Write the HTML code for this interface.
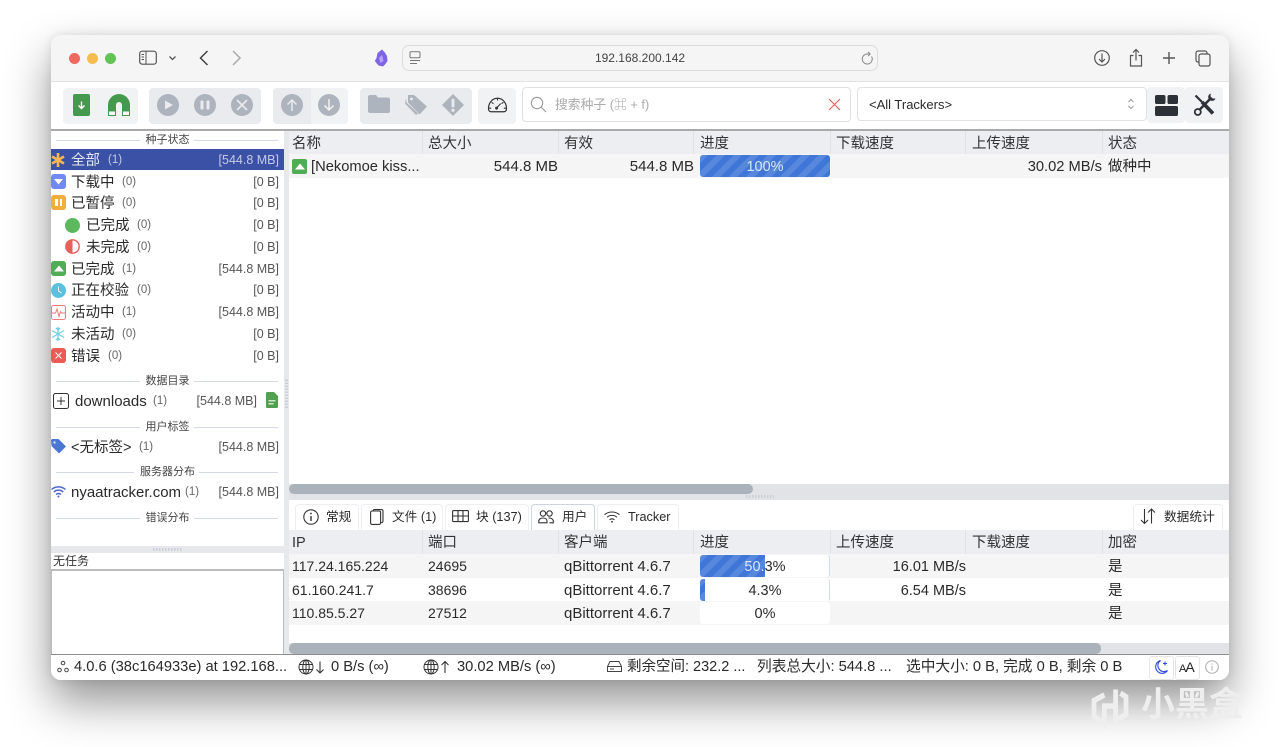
<!DOCTYPE html>
<html lang="zh"><head><meta charset="utf-8"><title>qBittorrent</title>
<style>
html,body{margin:0;padding:0;width:1280px;height:747px;overflow:hidden;background:#fff;font-family:"Liberation Sans","Noto Sans CJK SC",sans-serif;color:#222}
#win{position:absolute;left:51px;top:35px;width:1178px;height:645px;border-radius:10px;background:#fff;box-shadow:0 22px 45px rgba(0,0,0,.42),0 0 10px rgba(0,0,0,.1)}
.a{position:absolute}
.t{position:absolute;white-space:nowrap;line-height:20px;height:20px;font-size:14.5px;color:#2a2a2a;margin-top:1px}
.r{text-align:right}
.c{font-size:11.5px;color:#666}
.z{font-size:12.500px;color:#555;text-align:right;width:90px;left:189px}
.g{font-size:11px;color:#444;text-align:center}
.l{position:absolute;height:1px;background:#d5dae2}
.h{font-size:14.500px;color:#333}
.n{font-size:14px}
.q{font-size:15px}
.m{font-size:14.700px}
.k{font-size:12.700px}
.n,.c,.z,.g,.k,.o{margin-top:0}
.d{position:absolute;width:1px;background:#dfe1e6}
.s{position:absolute;overflow:visible}
.b{position:absolute;border-radius:4px}
.tab{position:absolute;top:504px;height:26px;background:#fff;border:1px solid #eceef2;border-bottom:0;border-radius:4px 4px 0 0;box-sizing:border-box}
.stripe{background-color:#3f76d8;background-image:repeating-linear-gradient(135deg,rgba(255,255,255,.13) 0 6px,transparent 6px 12px)}
</style></head><body>
<div id="win"></div>
<!-- title bar -->
<div class="a" style="left:51px;top:35px;width:1178px;height:47px;background:#f5f5f5;border-radius:10px 10px 0 0;border-bottom:1px solid #e2e2e2;box-sizing:border-box"></div>
<div class="a" style="left:69px;top:53px;width:11px;height:11px;border-radius:50%;background:#ee6a5f"></div>
<div class="a" style="left:87px;top:53px;width:11px;height:11px;border-radius:50%;background:#f5bd4f"></div>
<div class="a" style="left:105px;top:53px;width:11px;height:11px;border-radius:50%;background:#61c454"></div>
<svg class="s" style="left:139px;top:50px" width="40" height="16" viewBox="0 0 40 16" fill="none" stroke="#555"><rect x=".7" y="1.2" width="16.6" height="13" rx="2.5" stroke-width="1.2"/><path d="M7 1.5V14M2.500 4.500H5M2.500 7H5M2.500 9.500H5" stroke-width="1"/><path d="M30.500 6.500l3 3 3-3" stroke-width="1.300"/></svg>
<svg class="s" style="left:198px;top:49px" width="46" height="18" viewBox="0 0 46 18" fill="none" stroke-width="1.500"><path d="M9.500 2L2.500 9l7 7" stroke="#444"/><path d="M35 2l7 7-7 7" stroke="#aaa"/></svg>
<svg class="s" style="left:374px;top:49px" width="15" height="18" viewBox="0 0 15 18"><path d="M8 0.500L3.500 4 2.500 9 0.800 12 4.500 16.500 9 17.500 11 15.500 13.500 12 13 7 10.500 3z" fill="#8064e8"/><path d="M5 9l3-3 1.500 6-3 2z" fill="#b7a5f5"/></svg>
<div class="a" style="left:402px;top:45px;width:476px;height:26px;border:1px solid #dcdcdc;border-radius:7px;background:#f5f5f5;box-sizing:border-box"></div>
<svg class="s" style="left:409px;top:51px" width="13" height="14" viewBox="0 0 13 14" fill="none" stroke="#777" stroke-width="1"><rect x="1" y=".8" width="10" height="6" rx="1"/><path d="M1 9.500h10M1 12.500h7"/></svg>
<div class="t o" style="left:540px;width:200px;top:48px;text-align:center;font-size:12px;color:#444">192.168.200.142</div>
<svg class="s" style="left:861px;top:51px" width="13" height="14" viewBox="0 0 13 14" fill="none" stroke="#888" stroke-width="1"><path d="M10.600 5.500A5 5 0 1 1 6.500 3H9"/><path d="M7 .8L9.200 3 7 5.200"/></svg>
<svg class="s" style="left:1093px;top:48px" width="122" height="20" viewBox="0 0 122 20" fill="none" stroke="#555" stroke-width="1.200"><circle cx="9" cy="10" r="7.300"/><path d="M9 5.500v8.500M6 11l3 3 3-3"/><path d="M43 1.500v11M40 4.500l3-3 3 3M40.500 7.500H37.500v10.500h11V7.500h-3"/><path d="M76 4v12M70 10h12" stroke-width="1.400"/><rect x="103" y="3" width="11" height="11" rx="2"/><rect x="106" y="6" width="11" height="12" rx="2" fill="#f5f5f5"/></svg>
<!-- toolbar -->
<div class="a" style="left:51px;top:82px;width:1178px;height:47px;background:#fff;border-bottom:2px solid #a9a9a9"></div>
<div class="b" style="left:63px;top:88px;width:75px;height:36px;background:#f1f2f4"></div>
<div class="b" style="left:149px;top:88px;width:112px;height:36px;background:#e9ebef"></div>
<div class="b" style="left:273px;top:88px;width:75px;height:36px;background:#f1f2f4"></div>
<div class="b" style="left:273px;top:88px;width:38px;height:36px;background:#e9ebef;border-radius:4px 0 0 4px"></div>
<div class="b" style="left:360px;top:88px;width:112px;height:36px;background:#e9ebef"></div>
<div class="b" style="left:478px;top:88px;width:38px;height:36px;background:#f1f2f4"></div>
<svg class="s" style="left:73px;top:94px" width="18" height="22" viewBox="0 0 18 22"><rect x="0" y="0" width="17" height="22" rx="2" fill="#44994d"/><path d="M8.500 7.500v7M5.500 11.500l3 3 3-3" stroke="#fff" stroke-width="1.400" fill="none"/></svg>
<svg class="s" style="left:108px;top:94px" width="22" height="22" viewBox="0 0 22 22"><path d="M0 22V11A11 11 0 0 1 22 11V22H14V11A3 3 0 0 0 8 11V22z" fill="#44994d"/><rect x="1" y="17.500" width="6" height="3.500" fill="#fff"/><rect x="15" y="17.500" width="6" height="3.500" fill="#fff"/></svg>
<svg class="s" style="left:157px;top:94px" width="96" height="22" viewBox="0 0 96 22"><g fill="#adb4bd"><circle cx="11" cy="11" r="11"/><circle cx="48" cy="11" r="11"/><circle cx="85" cy="11" r="11"/></g><path d="M8 6.500l8 4.500-8 4.500z" fill="#e9ebef"/><rect x="43.500" y="6.500" width="3" height="9" rx="1" fill="#e9ebef"/><rect x="49.500" y="6.500" width="3" height="9" rx="1" fill="#e9ebef"/><path d="M80 6l10 10M90 6L80 16" stroke="#e9ebef" stroke-width="1.600"/></svg>
<svg class="s" style="left:281px;top:94px" width="60" height="22" viewBox="0 0 60 22"><g fill="#adb4bd"><circle cx="11" cy="11" r="11"/><circle cx="48" cy="11" r="11"/></g><path d="M11 17V6M6.500 10.500L11 6l4.500 4.500" stroke="#e9ebef" stroke-width="1.500" fill="none"/><path d="M48 5v11M43.500 11.500L48 16l4.500-4.500" stroke="#f1f2f4" stroke-width="1.500" fill="none"/></svg>
<svg class="s" style="left:368px;top:95px" width="22" height="18" viewBox="0 0 22 18"><path d="M0 2A2 2 0 0 1 2 0H8L10 2.500H20A2 2 0 0 1 22 4.500V16A2 2 0 0 1 20 18H2A2 2 0 0 1 0 16z" fill="#adb4bd"/></svg>
<svg class="s" style="left:405px;top:94px" width="23" height="22" viewBox="0 0 23 22"><path d="M1 4.500L0 9.500 11 21l2-1.500L1.500 8.500z" fill="#adb4bd"/><path d="M3 1H9L22 12.500 14.500 20.500 3 8.500zM6.500 3.500a1.500 1.500 0 1 0 .01 0" fill="#adb4bd" fill-rule="evenodd"/></svg>
<svg class="s" style="left:442px;top:94px" width="22" height="22" viewBox="0 0 23 23"><path d="M11.500 0L23 11.500 11.500 23 0 11.500z" fill="#adb4bd"/><rect x="10" y="5" width="3" height="9" rx="1" fill="#e9ebef"/><circle cx="11.500" cy="17" r="1.700" fill="#e9ebef"/></svg>
<svg class="s" style="left:487px;top:96px" width="21" height="18" viewBox="0 0 23 20" fill="none" stroke="#333" stroke-width="1.300"><path d="M4.500 17.500H18.500A3 3 0 0 0 21.500 14.500C21.800 8 17.500 2.500 11.500 2.500S1.200 8 1.500 14.500A3 3 0 0 0 4.500 17.500z"/><path d="M11.500 2.500v2.500M5 7l2 1.500M18 7l-2 1.500M2 13.500h2.500M21 13.500h-2.500M9.800 14L15 8.500" stroke-width="1.200"/><circle cx="10.500" cy="13.500" r="1" fill="#333"/></svg>
<div class="a" style="left:522px;top:87px;width:329px;height:35px;border:1px solid #dfe1e5;border-radius:4px;background:#fff;box-sizing:border-box"></div>
<svg class="s" style="left:530px;top:96px" width="17" height="17" viewBox="0 0 17 17" fill="none" stroke="#9a9a9a" stroke-width="1.100"><circle cx="7" cy="7" r="5.700"/><path d="M11 11l5 5"/></svg>
<div class="t o" style="left:555px;top:95px;font-size:12.800px;color:#aaa">搜索种子 (⌘ + f)</div>
<svg class="s" style="left:828px;top:98px" width="13" height="13" viewBox="0 0 13 13" stroke="#e8655e" stroke-width="1.200"><path d="M1 1l11 11M12 1L1 12"/></svg>
<div class="a" style="left:857px;top:87px;width:290px;height:34px;border:1px solid #dfe1e5;border-radius:4px;background:#fff;box-sizing:border-box"></div>
<div class="t" style="left:869px;top:94px;font-size:13px">&lt;All Trackers&gt;</div>
<svg class="s" style="left:1127px;top:97px" width="8" height="14" viewBox="0 0 8 14" fill="none" stroke="#999"><path d="M1.500 5L4 2.500 6.500 5M1.500 9L4 11.500 6.500 9"/></svg>
<div class="b" style="left:1147px;top:87px;width:38px;height:36px;background:#f1f2f4"></div>
<div class="b" style="left:1185px;top:87px;width:38px;height:36px;background:#f1f2f4"></div>
<svg class="s" style="left:1155px;top:95px" width="23" height="21" viewBox="0 0 23 21" fill="#2c3138"><rect x="0" y="0" width="10.500" height="9" rx="1.800"/><rect x="12.500" y="0" width="10.500" height="9" rx="1.800"/><rect x="0" y="11" width="23" height="10" rx="1.800"/></svg>
<svg class="s" style="left:1193px;top:93px" width="23" height="24" viewBox="0 0 23 24" fill="none" stroke="#2c3138"><path d="M2.500 2.500L9 9" stroke-width="2.200"/><path d="M9 9L20 20.500" stroke-width="3.600"/><path d="M18.500 4.500L6.800 16.500" stroke-width="2.400"/><path d="M22.500 5.500c-.6 2-3 3-5 2l-2-2c-.8-2 .2-4.300 2.200-5l-.2 3 2 2z" fill="#2c3138" stroke="none"/><circle cx="4.800" cy="19" r="3" stroke-width="1.800"/></svg>
<!-- sidebar -->
<div class="a" style="left:51px;top:131px;width:233px;height:415px;background:#fff"></div>
<div class="l" style="left:56px;top:140px;width:84px"></div><div class="l" style="left:194px;top:140px;width:84px"></div>
<div class="t g" style="left:51px;width:233px;top:130px">种子状态</div>
<div class="a" style="left:51px;top:149px;width:233px;height:21px;background:#3a51a5"></div>
<svg class="s" style="left:51px;top:153px" width="14" height="14" viewBox="0 0 14 14" stroke="#f5b74d" stroke-width="2.600"><path d="M7 0V14M1 3.500L13 10.500M13 3.500L1 10.500"/></svg>
<div class="t" style="left:71px;top:150px;color:#e6e9f5">全部</div><div class="t c" style="left:108px;top:150px;color:#c5cbe6">(1)</div><div class="t z" style="top:150px;color:#c5cbe6">[544.8 MB]</div>

<div class="b" style="left:51px;top:174px;width:15px;height:15px;background:#7189f0;border-radius:3px"></div><svg class="s" style="left:54px;top:179px" width="9" height="6"><path d="M0 0h9L4.500 5.500z" fill="#fff"/></svg>
<div class="t" style="left:71px;top:172px">下载中</div><div class="t c" style="left:122px;top:172px">(0)</div><div class="t z" style="top:172px">[0 B]</div>

<div class="b" style="left:51px;top:195px;width:15px;height:15px;background:#f2ae3d;border-radius:3px"></div><div class="a" style="left:55px;top:199px;width:2.500px;height:7px;background:#fff"></div><div class="a" style="left:59.500px;top:199px;width:2.500px;height:7px;background:#fff"></div>
<div class="t" style="left:71px;top:193px">已暂停</div><div class="t c" style="left:122px;top:193px">(0)</div><div class="t z" style="top:193px">[0 B]</div>

<div class="a" style="left:65px;top:218px;width:15px;height:15px;border-radius:50%;background:#5cb85c"></div>
<div class="t" style="left:86px;top:215px">已完成</div><div class="t c" style="left:137px;top:215px">(0)</div><div class="t z" style="top:215px">[0 B]</div>

<svg class="s" style="left:65px;top:239px" width="15" height="15" viewBox="0 0 15 15"><circle cx="7.500" cy="7.500" r="6.700" fill="#fff" stroke="#e8605a" stroke-width="1.400"/><path d="M7.500 1A6.500 6.500 0 0 1 7.500 14z" fill="#e8605a" transform="rotate(180 7.500 7.500)"/></svg>
<div class="t" style="left:86px;top:237px">未完成</div><div class="t c" style="left:137px;top:237px">(0)</div><div class="t z" style="top:237px">[0 B]</div>

<div class="b" style="left:51px;top:261px;width:15px;height:15px;background:#51ad55;border-radius:3px"></div><svg class="s" style="left:53.500px;top:265px" width="10" height="7"><path d="M0 6.500L5 .5l5 6z" fill="#fff"/></svg>
<div class="t" style="left:71px;top:259px">已完成</div><div class="t c" style="left:122px;top:259px">(1)</div><div class="t z" style="top:259px">[544.8 MB]</div>

<svg class="s" style="left:51px;top:283px" width="15" height="15" viewBox="0 0 15 15"><circle cx="7.500" cy="7.500" r="7.500" fill="#5bc0de"/><path d="M7.500 3.500v4.500l3 2" stroke="#fff" fill="none"/></svg>
<div class="t" style="left:71px;top:280px">正在校验</div><div class="t c" style="left:137px;top:280px">(0)</div><div class="t z" style="top:280px">[0 B]</div>

<svg class="s" style="left:51px;top:305px" width="15" height="15" viewBox="0 0 15 15" fill="none" stroke="#ee7d78"><rect x=".5" y=".5" width="14" height="14" rx="2"/><path d="M1 8H4.500L6 4l2 7.500L9.500 6.500 10.500 8H14"/></svg>
<div class="t" style="left:71px;top:302px">活动中</div><div class="t c" style="left:122px;top:302px">(1)</div><div class="t z" style="top:302px">[544.8 MB]</div>

<svg class="s" style="left:51px;top:327px" width="14" height="14" viewBox="0 0 14 14" stroke="#6fcfe4" stroke-width="1.300" fill="none"><path d="M7 0V14M1 3.500L13 10.500M13 3.500L1 10.500M5 1l2 2 2-2M5 13l2-2 2 2"/></svg>
<div class="t" style="left:71px;top:324px">未活动</div><div class="t c" style="left:122px;top:324px">(0)</div><div class="t z" style="top:324px">[0 B]</div>

<div class="b" style="left:51px;top:348px;width:15px;height:15px;background:#ea5b55;border-radius:3px"></div><svg class="s" style="left:55px;top:352px" width="7" height="7"><path d="M.5 .5l6 6M6.500 .5l-6 6" stroke="#fff"/></svg>
<div class="t" style="left:71px;top:346px">错误</div><div class="t c" style="left:108px;top:346px">(0)</div><div class="t z" style="top:346px">[0 B]</div>

<div class="l" style="left:56px;top:381px;width:84px"></div><div class="l" style="left:194px;top:381px;width:84px"></div>
<div class="t g" style="left:51px;width:233px;top:371px">数据目录</div>
<svg class="s" style="left:53px;top:393px" width="16" height="16" viewBox="0 0 16 16" fill="none" stroke="#333"><rect x=".5" y=".5" width="15" height="15" rx="2"/><path d="M8 4v8M4 8h8"/></svg>
<div class="t q" style="left:75px;top:391px">downloads</div><div class="t c" style="left:153px;top:391px">(1)</div><div class="t z" style="top:391px;left:167px">[544.8 MB]</div>
<svg class="s" style="left:266px;top:392px" width="12" height="16" viewBox="0 0 12 16"><path d="M1.500 0H8L12 4V14.500A1.500 1.500 0 0 1 10.500 16H1.500A1.500 1.500 0 0 1 0 14.500V1.500A1.500 1.500 0 0 1 1.500 0z" fill="#51a04f"/><path d="M2.500 8h7v1.500h-7zM2.500 11h5v1.500h-5z" fill="#cfe6cd"/></svg>

<div class="l" style="left:56px;top:427px;width:84px"></div><div class="l" style="left:194px;top:427px;width:84px"></div>
<div class="t g" style="left:51px;width:233px;top:417px">用户标签</div>
<svg class="s" style="left:51px;top:439px" width="15" height="15" viewBox="0 0 15 15"><path d="M1 0H7.500L15 7.500 8 14.500 0.500 7 0 1z" fill="#4a76d4"/><circle cx="3.500" cy="3.500" r="1.200" fill="#cfdcf7"/></svg>
<div class="t" style="left:71px;top:437px">&lt;无标签&gt;</div><div class="t c" style="left:139px;top:437px">(1)</div><div class="t z" style="top:437px">[544.8 MB]</div>

<div class="l" style="left:56px;top:472px;width:78px"></div><div class="l" style="left:199px;top:472px;width:79px"></div>
<div class="t g" style="left:51px;width:233px;top:462px">服务器分布</div>
<svg class="s" style="left:51px;top:486px" width="15" height="12" viewBox="0 0 15 12" fill="none" stroke="#4a66cc" stroke-width="1.400"><path d="M.5 3.500C4.500 0 10.500 0 14.500 3.500M2.800 6C5.500 3.500 9.500 3.500 12.200 6M5 8.500C6.500 7.300 8.500 7.300 10 8.500"/><circle cx="7.500" cy="10.500" r="1" fill="#4a66cc" stroke="none"/></svg>
<div class="t q" style="left:71px;top:482px">nyaatracker.com</div><div class="t c" style="left:185px;top:482px">(1)</div><div class="t z" style="top:482px">[544.8 MB]</div>

<div class="l" style="left:56px;top:518px;width:84px"></div><div class="l" style="left:194px;top:518px;width:84px"></div>
<div class="t g" style="left:51px;width:233px;top:508px">错误分布</div>

<!-- splitter + log -->
<div class="a" style="left:51px;top:546px;width:233px;height:7px;background:#e6e8ec"></div>
<div class="a" style="left:153px;top:548px;width:29px;height:3px;background:repeating-linear-gradient(90deg,#ccd0d6 0 1.500px,transparent 1.500px 3px)"></div>
<div class="a" style="left:51px;top:553px;width:233px;height:17px;background:#fff"></div>
<div class="t o" style="left:53px;top:551px;font-size:12px;color:#333">无任务</div>
<div class="a" style="left:51px;top:569px;width:233px;height:85px;border:1px solid #bbb;border-width:2px 1px 0;box-sizing:border-box;background:#fff"></div>
<div class="a" style="left:284px;top:131px;width:5px;height:523px;background:#e6e8ec"></div>
<div class="a" style="left:285px;top:378px;width:3px;height:30px;background:repeating-linear-gradient(0deg,#ccd0d6 0 1.500px,transparent 1.500px 3px)"></div>

<!-- top table -->
<div class="a" style="left:289px;top:131px;width:940px;height:23px;background:#eceef2"></div>
<div class="a" style="left:289px;top:154px;width:940px;height:24px;background:#f5f5f5"></div>
<div class="d" style="left:422px;top:131px;height:23px"></div><div class="d" style="left:558px;top:131px;height:23px"></div><div class="d" style="left:693px;top:131px;height:23px"></div><div class="d" style="left:830px;top:131px;height:23px"></div><div class="d" style="left:965px;top:131px;height:23px"></div><div class="d" style="left:1102px;top:131px;height:23px"></div>
<div class="t h" style="left:292px;top:133px">名称</div><div class="t h" style="left:428px;top:133px">总大小</div><div class="t h" style="left:564px;top:133px">有效</div><div class="t h" style="left:700px;top:133px">进度</div><div class="t h" style="left:836px;top:133px">下载速度</div><div class="t h" style="left:972px;top:133px">上传速度</div><div class="t h" style="left:1108px;top:133px">状态</div>
<div class="b" style="left:292px;top:159px;width:15px;height:15px;background:#51ad55;border-radius:2px"></div><svg class="s" style="left:294.500px;top:163px" width="10" height="7"><path d="M0 6.500L5 .5l5 6z" fill="#fff"/></svg>
<div class="t m" style="left:311px;top:156px">[Nekomoe kiss...</div>
<div class="t r q" style="left:428px;width:130px;top:156px">544.8 MB</div>
<div class="t r q" style="left:564px;width:130px;top:156px">544.8 MB</div>
<div class="a stripe" style="left:700px;top:155px;width:130px;height:22px;border-radius:3px"></div>
<div class="t" style="left:700px;width:130px;top:156px;text-align:center;color:#dbe6fa">100%</div>
<div class="t r m" style="left:972px;width:130px;top:156px">30.02 MB/s</div>
<div class="t" style="left:1108px;top:156px">做种中</div>

<!-- scrollbar 1 -->
<div class="a" style="left:289px;top:484px;width:940px;height:16px;background:#e1e3e7"></div>
<div class="a" style="left:289px;top:484px;width:464px;height:10px;background:#aab2bb;border-radius:5px"></div>
<div class="a" style="left:746px;top:495px;width:28px;height:3px;background:repeating-linear-gradient(90deg,#ccd0d6 0 1.500px,transparent 1.500px 3px)"></div>

<!-- tabs -->
<div class="tab" style="left:295px;width:64px"></div>
<div class="tab" style="left:361px;width:82px"></div>
<div class="tab" style="left:445px;width:84px"></div>
<div class="tab" style="left:531px;width:64px;border-color:#cfd3da"></div>
<div class="tab" style="left:597px;width:82px"></div>
<div class="tab" style="left:1133px;width:90px"></div>
<svg class="s" style="left:303px;top:509px" width="16" height="16" viewBox="0 0 16 16" fill="none" stroke="#333" stroke-width="1.100"><circle cx="8" cy="8" r="7.200"/><path d="M8 7v5" stroke-width="1.400"/><circle cx="8" cy="4.500" r=".9" fill="#333" stroke="none"/></svg>
<div class="t k" style="left:326px;top:507px">常规</div>
<svg class="s" style="left:370px;top:509px" width="14" height="16" viewBox="0 0 14 16" fill="none" stroke="#333" stroke-width="1.100"><rect x=".6" y="2" width="10" height="13.400" rx="1.500"/><path d="M3 2A1.500 1.500 0 0 1 4.500 .6H11.500A1.500 1.500 0 0 1 13 2V12A1.500 1.500 0 0 1 11 13.500"/></svg>
<div class="t k" style="left:392px;top:507px">文件 (1)</div>
<svg class="s" style="left:452px;top:510px" width="17" height="13" viewBox="0 0 17 13" fill="none" stroke="#333" stroke-width="1.100"><rect x=".6" y=".6" width="15.800" height="11" rx="1"/><path d="M.6 6H16.400M6 .6V11.600M11 .6V11.600"/></svg>
<div class="t k" style="left:476px;top:507px">块 (137)</div>
<svg class="s" style="left:538px;top:510px" width="16" height="14" viewBox="0 0 16 14" fill="none" stroke="#333" stroke-width="1.100"><circle cx="5" cy="3.500" r="2.700"/><circle cx="11.500" cy="3.500" r="2.700"/><path d="M.8 12.800V11C.8 9 3 8 5 8S9 9 9 11V12.800zM10.500 8C12.800 7.800 15.300 9 15.300 11V12.800H11.500"/></svg>
<div class="t k" style="left:562px;top:507px">用户</div>
<svg class="s" style="left:604px;top:511px" width="16" height="12" viewBox="0 0 16 12" fill="none" stroke="#333" stroke-width="1"><path d="M.5 3.800C4.800 0 11.200 0 15.500 3.800M3 6.300C5.800 3.800 10.200 3.800 13 6.300M5.500 8.800C7 7.600 9 7.600 10.500 8.800"/><circle cx="8" cy="10.800" r=".9" fill="#333" stroke="none"/></svg>
<div class="t k" style="left:628px;top:507px">Tracker</div>
<svg class="s" style="left:1140px;top:508px" width="16" height="17" viewBox="0 0 16 17" fill="none" stroke="#333" stroke-width="1.100"><path d="M4.500 1v14.500M1 12l3.500 3.500L8 12M11.500 15.500V1M8 4.500L11.500 1 15 4.500"/></svg>
<div class="t k" style="left:1164px;top:507px">数据统计</div>

<!-- bottom table -->
<div class="a" style="left:289px;top:530px;width:940px;height:24px;background:#eceef2"></div>
<div class="a" style="left:289px;top:554px;width:940px;height:24px;background:#f5f5f5"></div>
<div class="a" style="left:289px;top:601px;width:940px;height:24px;background:#f5f5f5"></div>
<div class="d" style="left:422px;top:530px;height:24px"></div><div class="d" style="left:558px;top:530px;height:24px"></div><div class="d" style="left:693px;top:530px;height:24px"></div><div class="d" style="left:830px;top:530px;height:24px"></div><div class="d" style="left:965px;top:530px;height:24px"></div><div class="d" style="left:1102px;top:530px;height:24px"></div>
<div class="t h" style="left:292px;top:532px">IP</div><div class="t h" style="left:428px;top:532px">端口</div><div class="t h" style="left:564px;top:532px">客户端</div><div class="t h" style="left:700px;top:532px">进度</div><div class="t h" style="left:836px;top:532px">上传速度</div><div class="t h" style="left:972px;top:532px">下载速度</div><div class="t h" style="left:1108px;top:532px">加密</div>

<div class="a" style="left:700px;top:555px;width:130px;height:22px;background:#fff;border-right:1px solid #cfdcf2;box-sizing:border-box;border-radius:3px"></div>
<div class="a stripe" style="left:700px;top:555px;width:65px;height:22px;border-radius:3px 0 0 3px"></div>
<div class="a" style="left:700px;top:579px;width:130px;height:22px;background:#fff;border-right:1px solid #cfdcf2;box-sizing:border-box;border-radius:3px"></div>
<div class="a stripe" style="left:700px;top:579px;width:5px;height:22px;border-radius:3px 0 0 3px"></div>
<div class="a" style="left:700px;top:602px;width:130px;height:22px;background:#fff;border-radius:3px"></div>

<div class="t n" style="left:292px;top:556px">117.24.165.224</div><div class="t n" style="left:428px;top:556px">24695</div><div class="t q" style="left:564px;top:556px">qBittorrent 4.6.7</div><div class="t" style="left:700px;width:130px;top:556px;text-align:center"><span style="color:#dbe6fa">50.</span>3%</div><div class="t r" style="left:836px;width:130px;top:556px">16.01 MB/s</div><div class="t" style="left:1108px;top:556px">是</div>
<div class="t n" style="left:292px;top:580px">61.160.241.7</div><div class="t n" style="left:428px;top:580px">38696</div><div class="t q" style="left:564px;top:580px">qBittorrent 4.6.7</div><div class="t" style="left:700px;width:130px;top:580px;text-align:center">4.3%</div><div class="t r" style="left:836px;width:130px;top:580px">6.54 MB/s</div><div class="t" style="left:1108px;top:580px">是</div>
<div class="t n" style="left:292px;top:603px">110.85.5.27</div><div class="t n" style="left:428px;top:603px">27512</div><div class="t q" style="left:564px;top:603px">qBittorrent 4.6.7</div><div class="t" style="left:700px;width:130px;top:603px;text-align:center">0%</div><div class="t" style="left:1108px;top:603px">是</div>

<!-- scrollbar 2 -->
<div class="a" style="left:289px;top:643px;width:940px;height:11px;background:#e1e3e7"></div>
<div class="a" style="left:289px;top:643px;width:812px;height:11px;background:#aab2bb;border-radius:5px"></div>

<!-- status -->
<div class="a" style="left:51px;top:654px;width:1178px;height:26px;background:#fff;border-top:1px solid #8c8c8c;box-sizing:border-box;border-radius:0 0 10px 10px"></div>
<svg class="s" style="left:57px;top:660px" width="12" height="13" viewBox="0 0 12 13" fill="none" stroke="#444"><circle cx="6" cy="3" r="1.800"/><circle cx="2.500" cy="10" r="1.800"/><circle cx="9.500" cy="10" r="1.800"/></svg>
<div class="t m" style="left:74px;top:656px">4.0.6 (38c164933e) at 192.168...</div>
<svg class="s" style="left:298px;top:659px" width="28" height="16" viewBox="0 0 28 16" fill="none" stroke="#333"><circle cx="8" cy="8" r="7"/><ellipse cx="8" cy="8" rx="3.200" ry="7"/><path d="M1 5.500H15M1 10.500H15M8 1V15"/><path d="M22 2.500V14M18.500 10.500L22 14l3.500-3.500" stroke-width="1.100"/></svg>
<div class="t m" style="left:331px;top:656px">0 B/s (∞)</div>
<svg class="s" style="left:423px;top:659px" width="28" height="16" viewBox="0 0 28 16" fill="none" stroke="#333"><circle cx="8" cy="8" r="7"/><ellipse cx="8" cy="8" rx="3.200" ry="7"/><path d="M1 5.500H15M1 10.500H15M8 1V15"/><path d="M22 14V2.500M18.500 6L22 2.500 25.500 6" stroke-width="1.100"/></svg>
<div class="t m" style="left:457px;top:656px">30.02 MB/s (∞)</div>
<svg class="s" style="left:607px;top:661px" width="15" height="11" viewBox="0 0 15 11" fill="none" stroke="#444"><path d="M3 .5H12L14.500 5.500V10.500H.5V5.500zM.5 5.500H14.500M3 8H7"/></svg>
<div class="t" style="left:627px;top:656px">剩余空间: 232.2 ...</div>
<div class="t m" style="left:757px;top:656px">列表总大小: 544.8 ...</div>
<div class="t m" style="left:906px;top:656px">选中大小: 0 B, 完成 0 B, 剩余 0 B</div>
<div class="a" style="left:1149px;top:656px;width:25px;height:24px;border:1px solid #e3e5e9;border-radius:3px;box-sizing:border-box"></div>
<div class="a" style="left:1175px;top:656px;width:25px;height:24px;border:1px solid #e3e5e9;border-radius:3px;box-sizing:border-box"></div>
<svg class="s" style="left:1154px;top:659px" width="15" height="16" viewBox="0 0 15 16" fill="none" stroke="#2d4be0" stroke-width="1.100"><path d="M6.500 1.500A6.500 6.500 0 1 0 13.500 11.500 6 6 0 0 1 6.500 1.500z"/><path d="M11 2.500v4M9 4.500h4"/></svg>
<div class="t o" style="left:1179px;top:657px;font-size:14px;letter-spacing:-1px;color:#222"><span style="font-size:11px">A</span>A</div>
<svg class="s" style="left:1205px;top:660px" width="14" height="14" viewBox="0 0 14 14" fill="none" stroke="#aaa"><circle cx="7" cy="7" r="6.300"/><path d="M7 6v4.500M7 3.500v1.200"/></svg>

<!-- watermark -->
<svg class="s" style="left:1090px;top:684px" width="40" height="46" viewBox="0 0 50 50" preserveAspectRatio="none" fill="none" stroke="#eeeeee" stroke-width="6"><path d="M18 12L5 18V35L18 44V24H32V6M32 24V40L45 33V14L38 10"/></svg>
<div class="t o" style="left:1141px;top:688px;width:104px;height:34px;line-height:34px;font-size:34px;font-weight:bold;color:#eeeeee">小黑盒</div>
</body></html>
